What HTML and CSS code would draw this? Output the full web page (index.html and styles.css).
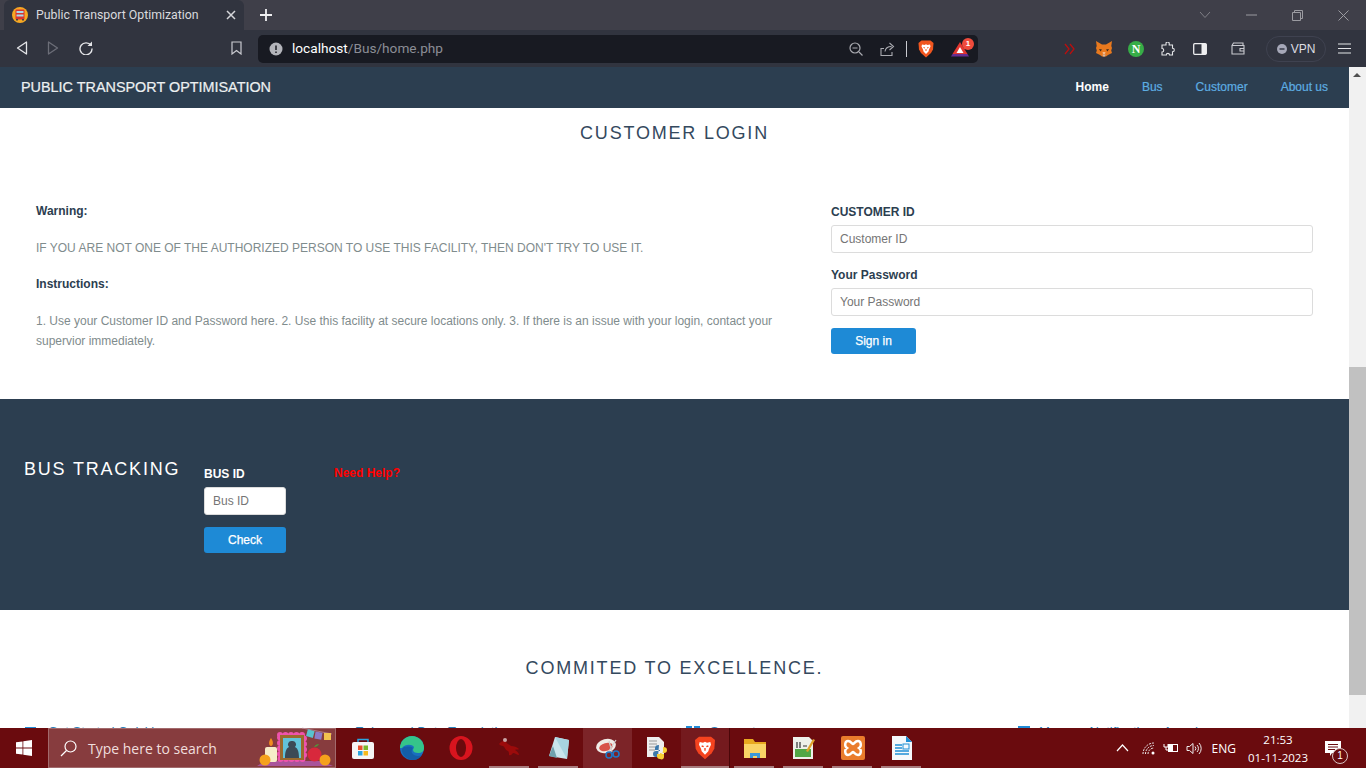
FILE: index.html
```html
<!DOCTYPE html>
<html lang="en">
<head>
    <meta charset="UTF-8">
    <meta name="viewport" content="width=device-width, initial-scale=1.0">
    <link rel="stylesheet" href="styles.css">
    <title>Public Transport Optimization</title>
</head>
<body>
<div class="screen">
    <div class="tabstrip">
        <div class="tab">
            <svg class="favicon" width="16" height="16" viewBox="0 0 16 16"><circle cx="8" cy="8" r="8" fill="#f7a823"/><rect x="3.500" y="2.500" width="9" height="10" rx="1" fill="#d8352f"/><rect x="4.500" y="4" width="7" height="2" fill="#a9d8ea"/><rect x="4.500" y="7.500" width="7" height="2" fill="#a9d8ea"/><rect x="4" y="12" width="2" height="1.500" fill="#444"/><rect x="10" y="12" width="2" height="1.500" fill="#444"/></svg>
            <span class="tab-title">Public Transport Optimization</span>
            <svg class="tab-close" width="10" height="10" viewBox="0 0 10 10"><path d="M1 1l8 8M9 1l-8 8" stroke="#d5d6da" stroke-width="1.500"/></svg>
        </div>
        <svg class="new-tab" width="14" height="14" viewBox="0 0 14 14"><path d="M7 1v12M1 7h12" stroke="#f0f0f2" stroke-width="1.800"/></svg>
        <div class="win-controls">
            <svg width="12" height="8" viewBox="0 0 12 8"><path d="M1 1l5 5.500 5-5.500" fill="none" stroke="#7f7f86"/></svg>
            <svg width="11" height="2" viewBox="0 0 11 2"><path d="M0 1h11" stroke="#9b9ba1"/></svg>
            <svg width="11" height="11" viewBox="0 0 11 11"><path d="M.5 2.500h8v8h-8zM2.500 2.500v-2h8v8h-2" fill="none" stroke="#9b9ba1"/></svg>
            <svg width="11" height="11" viewBox="0 0 11 11"><path d="M.5 .5l10 10M10.500 .5l-10 10" stroke="#9b9ba1"/></svg>
        </div>
    </div>

    <div class="toolbar">
        <div class="nav-btns">
            <svg width="12" height="14" viewBox="0 0 12 14"><path d="M10.500 1v12L1.500 7z" fill="none" stroke="#e4e5e8" stroke-width="1.300" stroke-linejoin="round"/></svg>
            <svg width="12" height="14" viewBox="0 0 12 14"><path d="M1.500 1v12L10.500 7z" fill="none" stroke="#6c6e78" stroke-width="1.300" stroke-linejoin="round"/></svg>
            <svg width="14" height="14" viewBox="0 0 14 14"><path d="M12 4.500A6 6 0 1 0 13 7.500" fill="none" stroke="#e4e5e8" stroke-width="1.400"/><path d="M13 .5V5H8.500z" fill="#e4e5e8"/></svg>
        </div>
        <svg class="bookmark" width="11" height="14" viewBox="0 0 11 14"><path d="M1 1h9v12L5.500 9.500 1 13z" fill="none" stroke="#c9cad0" stroke-width="1.200"/></svg>
        <div class="urlbar">
            <svg class="url-info" width="14" height="14" viewBox="0 0 14 14"><circle cx="7" cy="7" r="6.500" fill="#b4b5bb"/><path d="M7 3.500V8M7 9.500V11" stroke="#1b1d25" stroke-width="1.500"/></svg>
            <span class="url-text"><span class="url-host">localhost</span>/Bus/home.php</span>
            <div class="url-icons">
                <svg width="14" height="14" viewBox="0 0 14 14"><circle cx="6" cy="6" r="5" fill="none" stroke="#a9aab0" stroke-width="1.200"/><path d="M3.500 6h5M10 10l3.500 3.500" stroke="#a9aab0" stroke-width="1.200"/></svg>
                <svg class="url-share" width="15" height="14" viewBox="0 0 15 14"><path d="M4 6.500H1v7h11V10M5 9.500c.5-3.500 3-5 6.500-5M9.500 1l4 3.500-4 3.500" fill="none" stroke="#a9aab0" stroke-width="1.100"/></svg>
                <span class="url-divider"></span>
                <svg class="url-brave" width="16" height="18" viewBox="0 0 16 18"><path d="M3.500 .5h9L15.500 3 15 9.500 13 13l-5 4.500L3 13 1 9.500.5 3z" fill="#f1561f"/><path d="M4 4.500l2.500.5L8 4.300 9.500 5 12 4.500l.5 2L11 9.500l-.5 2L8 14l-2.500-2.500-.5-2L3.500 6.500z" fill="#fff"/><path d="M5.500 7.500l1.500.5M10.500 7.500L9 8M8 9v2" stroke="#f1561f"/></svg>
                <span class="bat">
                    <svg width="18" height="16" viewBox="0 0 18 16"><path d="M9 1l7.500 12h-15z" fill="#e2362f"/><path d="M1.500 13H16.500L18 15.500H0z" fill="#662d91"/><path d="M9 6l3.500 6h-7z" fill="#fff"/></svg>
                    <span class="bat-badge">1</span>
                </span>
            </div>
        </div>
        <div class="ext-icons">
            <svg class="ext-arrows" width="11" height="12" viewBox="0 0 11 12"><path d="M1 1l4 5-4 5M6 1l4 5-4 5" fill="none" stroke="#b80f0f" stroke-width="1.300"/></svg>
            <svg class="ext-fox" width="16" height="16" viewBox="0 0 16 16"><path d="M0 0l6 3.500h4L16 0l-.7 5 .7 2-.8 2.500.8 2.500-4 2-2 1.500H6l-2-1.500-4-2 .8-2.500L0 7l.7-2z" fill="#e8791e"/><path d="M3 8l3 .5-1.500 2zM13 8l-3 .5 1.500 2z" fill="#3c2a1c"/><path d="M6.500 11h3L9 13H7z" fill="#f5b98a"/><path d="M6.500 13.500h3L9 15.500H7z" fill="#cdb8a8"/></svg>
            <span class="ext-n">N</span>
            <svg class="ext-puzzle" width="14" height="14" viewBox="0 0 14 14"><path d="M5 1.500a1.600 1.600 0 0 1 3.200 0V3h3.300v3.200a1.700 1.700 0 0 1 0 3.600V13H8.500a1.600 1.600 0 0 0-3.200 0H1V10a1.700 1.700 0 0 0 0-3.500V3h4z" fill="none" stroke="#e4e5e8" stroke-width="1.100"/></svg>
            <svg class="ext-side" width="14" height="12" viewBox="0 0 14 12"><rect x=".7" y=".7" width="12.600" height="10.600" rx="1" fill="none" stroke="#eeeef0" stroke-width="1.300"/><rect x="8.500" y="1" width="5" height="10" fill="#eeeef0"/></svg>
            <svg class="ext-wallet" width="14" height="13" viewBox="0 0 14 13"><path d="M1 3.500h12V12H1zM1 3.500L2.500 1H12v2.500M9 6.500h4V9H9z" fill="none" stroke="#c9cad0" stroke-width="1.100"/></svg>
            <div class="vpn">
                <svg width="10" height="10" viewBox="0 0 10 10"><circle cx="5" cy="5" r="5" fill="#a6a8b8"/><path d="M2.500 5h5" stroke="#30333f" stroke-width="1.400"/></svg>
                <span>VPN</span>
            </div>
            <svg class="ext-menu" width="13" height="11" viewBox="0 0 13 11"><path d="M0 1h13M0 5.500h13M0 10h13" stroke="#e4e5e8" stroke-width="1.200"/></svg>
        </div>
    </div>

    <div class="viewport">
        <div class="page">
            <nav class="navbar">
                <a class="brand">PUBLIC TRANSPORT OPTIMISATION</a>
                <ul class="nav-links">
                    <li class="active">Home</li>
                    <li>Bus</li>
                    <li>Customer</li>
                    <li>About us</li>
                </ul>
            </nav>

            <section class="login">
                <h2 class="heading">CUSTOMER LOGIN</h2>
                <div class="login-row">
                    <div class="login-info">
                        <p class="strong">Warning:</p>
                        <p>IF YOU ARE NOT ONE OF THE AUTHORIZED PERSON TO USE THIS FACILITY, THEN DON'T TRY TO USE IT.</p>
                        <p class="strong">Instructions:</p>
                        <p class="steps">1. Use your Customer ID and Password here. 2. Use this facility at secure locations only. 3. If there is an issue with your login, contact your supervior immediately.</p>
                    </div>
                    <form class="login-form">
                        <label for="cid">CUSTOMER ID</label>
                        <input id="cid" type="text" placeholder="Customer ID">
                        <label for="pwd">Your Password</label>
                        <input id="pwd" type="text" placeholder="Your Password">
                        <button type="button" class="btn">Sign in</button>
                    </form>
                </div>
            </section>

            <section class="tracking">
                <h2 class="tracking-title">BUS TRACKING</h2>
                <form class="tracking-form">
                    <label for="bid">BUS ID</label>
                    <input id="bid" type="text" placeholder="Bus ID">
                    <button type="button" class="btn">Check</button>
                </form>
                <a class="help">Need Help?</a>
            </section>

            <section class="excellence">
                <h2 class="heading">COMMITED TO EXCELLENCE.</h2>
                <div class="features">
                    <span class="feature f1"><i></i>Get Started Quickly</span>
                    <span class="feature f2">Enhanced Data Translation</span>
                    <span class="feature f3"><i></i>Support</span>
                    <span class="feature f4"><i></i>Manage Notifications Anywhere</span>
                </div>
            </section>
        </div>
        <div class="scrollbar">
            <span class="arrow"></span>
            <div class="thumb"></div>
        </div>
    </div>

    <div class="taskbar">
        <svg class="start" width="16" height="16" viewBox="0 0 16 16"><path d="M0 2.300l6.500-.9v6.200H0zM7.300 1.300L16 0v7.600H7.300zM0 8.400h6.500v6.200L0 13.700zM7.300 8.400H16V16l-8.700-1.300z" fill="#fff"/></svg>
        <div class="search">
            <svg width="17" height="17" viewBox="0 0 17 17"><circle cx="10.500" cy="6.500" r="5.500" fill="none" stroke="#fff" stroke-width="1.200"/><path d="M6.500 10.500L1 16" stroke="#fff" stroke-width="1.300"/></svg>
            <span>Type here to search</span>
            <svg class="search-art" width="80" height="40" viewBox="0 0 80 40">
                <path d="M2 39l8-5h56l12 5z" fill="#a9549b"/>
                <rect x="10" y="20" width="12" height="15" rx="2" fill="#f6ecc8"/>
                <path d="M16 11c3 4 2 8 0 8s-3-4 0-8z" fill="#f28c1e"/>
                <rect x="25" y="8" width="24" height="24" fill="#ee53ad" stroke="#ee53ad" stroke-width="6" stroke-dasharray="0 5.500" stroke-linecap="round"/>
                <rect x="25" y="8" width="24" height="25" fill="#9b6a2d"/>
                <rect x="28" y="11" width="18" height="20" fill="#62c3d8"/>
                <path d="M37 14a3.500 3.500 0 0 1 3 6c2 1 4 3 4 11H30c0-8 2-10 4-11a3.500 3.500 0 0 1 3-6z" fill="#3c4a55"/>
                <circle cx="59.500" cy="27.500" r="7" fill="#d8283c"/>
                <path d="M59 20c1-2 3-3 5-3-1 2-3 3-5 3z" fill="#4f9a3a"/>
                <circle cx="10" cy="33" r="5.500" fill="#f5a11c"/>
                <circle cx="70" cy="33" r="5.500" fill="#f5a11c"/>
                <path d="M47 1l30 6" stroke="#c8a0b0" stroke-width=".6"/>
                <rect x="52" y="3" width="7" height="7" fill="#58c3cf" transform="rotate(15 55 6)"/>
                <rect x="60" y="5" width="7" height="7" fill="#8d7ac8" transform="rotate(10 63 8)"/>
                <rect x="69" y="6" width="7" height="7" fill="#f2c14e"/>
            </svg>
        </div>
        <div class="task-icons">
            <div class="task-icon">
                <svg width="24" height="24" viewBox="0 0 24 24"><path d="M7 7V3.500h10V7" fill="none" stroke="#2ba5e0" stroke-width="1.500"/><rect x="1" y="6" width="22" height="17" rx="2" fill="#f5f5f5"/><rect x="7" y="9.500" width="4.500" height="4.500" fill="#e8502e"/><rect x="12.500" y="9.500" width="4.500" height="4.500" fill="#79b82b"/><rect x="7" y="15" width="4.500" height="4.500" fill="#2ba5e0"/><rect x="12.500" y="15" width="4.500" height="4.500" fill="#f5b91b"/></svg>
            </div>
            <div class="task-icon">
                <svg width="24" height="24" viewBox="0 0 24 24"><circle cx="12" cy="12" r="12" fill="#1a6fc0"/><path d="M0 12A12 12 0 0 1 24 12c0 3-2 5-6 5-3 0-5-1-5-3 0-1 1-2 1-3-2-3-9-3-12 1z" fill="#35c48a"/><path d="M2 13c-1 5 5 11 11 11 4 0 7-2 9-5-4 2-8 1-10-2-1-2 0-4 1-5-3-2-9-2-11 1z" fill="#145ea8"/></svg>
            </div>
            <div class="task-icon">
                <svg width="24" height="24" viewBox="0 0 24 24"><ellipse cx="12" cy="12" rx="11.500" ry="12" fill="#d8141e"/><ellipse cx="12" cy="12" rx="5" ry="9" fill="#6b0a0d"/></svg>
            </div>
            <div class="task-icon running">
                <svg width="24" height="24" viewBox="0 0 24 24"><path d="M1 8c2-3 6-4 7-2 1 2 3 2 5 4 3 0 6 1 8 3-1 1-3 0-4 1 2 1 4 3 4 5-2 0-4-2-6-2-1 1-2 3-4 2 0-2 0-3-1-4-3-1-3-4-5-5-2 0-3-1-4-2z" fill="#9c0b0b"/><circle cx="7" cy="4" r="2" fill="#c9a5a5"/></svg>
            </div>
            <div class="task-icon running">
                <svg width="24" height="24" viewBox="0 0 24 24"><path d="M8 1l14 3-2 19L2 20z" fill="#c9e4ec"/><path d="M8 1l14 3-2 19z" fill="#a8d4e0"/><path d="M2 20l4-10 4 12z" fill="#6fa0ad"/></svg>
            </div>
            <div class="task-icon open">
                <svg width="24" height="24" viewBox="0 0 24 24"><ellipse cx="10" cy="10" rx="10" ry="7" fill="#f0ece8" transform="rotate(-15 10 10)"/><ellipse cx="10" cy="11" rx="7" ry="4" fill="#d8534a" transform="rotate(-15 10 11)"/><path d="M13 5l3 11M20 4l-7 11" stroke="#d0d0d0" stroke-width="1.200"/><circle cx="13" cy="19" r="3" fill="none" stroke="#1f78c8" stroke-width="1.600"/><circle cx="20" cy="18" r="3" fill="none" stroke="#1f78c8" stroke-width="1.600"/></svg>
            </div>
            <div class="task-icon">
                <svg width="24" height="24" viewBox="0 0 24 24"><path d="M2 1h12l5 5v15H2z" fill="#eeeeee"/><path d="M4 5h8M4 8h8M4 11h6M4 14h6" stroke="#999"/><path d="M14 9c-3 0-4 1-4 3v2h5v1h-4c-2 0-3 1-3 3s1 3 3 3h2z" fill="#3b78ab"/><path d="M18 11c3 0 4 1 4 3s-1 3-3 3h-4v1h4v3c0 2-2 3-4 2-2 0-3-1-3-3v-2h3c2 0 3-1 3-3z" fill="#f7cf35"/></svg>
            </div>
            <div class="task-icon open brave running">
                <svg width="22" height="24" viewBox="0 0 16 18"><path d="M3.500 .5h9L15.500 3 15 9.500 13 13l-5 4.500L3 13 1 9.500.5 3z" fill="#f4431f"/><path d="M4 4.500l2.500.5L8 4.300 9.500 5 12 4.500l.5 2L11 9.500l-.5 2L8 14l-2.500-2.500-.5-2L3.500 6.500z" fill="#fff"/><path d="M5.500 7.500l1.500.5M10.500 7.500L9 8M8 9v2" stroke="#f4431f"/></svg>
            </div>
            <div class="task-icon running">
                <svg width="24" height="22" viewBox="0 0 24 22"><path d="M1 2h9l2 3h11v16H1z" fill="#e8a91f"/><rect x="1" y="7" width="22" height="14" fill="#f9d466"/><path d="M7 21v-5h10v5h-3v-2h-4v2z" fill="#3d9ad8"/></svg>
            </div>
            <div class="task-icon running">
                <svg width="24" height="24" viewBox="0 0 24 24"><path d="M1 1h16l4 4v18H1z" fill="#eef1ea"/><rect x="3" y="13" width="16" height="8" fill="#52a745"/><path d="M5 6v6M8 6v6M11 10h4" stroke="#333" stroke-width="1.200"/><path d="M14 15l7-12 2 1-7 12z" fill="#e0a22b"/></svg>
            </div>
            <div class="task-icon running">
                <svg width="24" height="24" viewBox="0 0 24 24"><rect width="24" height="24" rx="2" fill="#ea7c2c"/><path d="M7 5c3 0 4 3 5 3s2-3 5-3 4 5 1 7c3 2 2 7-1 7s-4-3-5-3-2 3-5 3-4-5-1-7c-3-2-2-7 1-7z" fill="none" stroke="#fff" stroke-width="2.400"/></svg>
            </div>
            <div class="task-icon running">
                <svg width="20" height="24" viewBox="0 0 20 24"><path d="M0 0h14l6 6v18H0z" fill="#f5f8fb"/><path d="M14 0l6 6h-6z" fill="#1f8fd6"/><path d="M3 9h7M3 12h7M3 15h14M3 18h14" stroke="#1f8fd6" stroke-width="1.300"/><rect x="11" y="8" width="6" height="5" fill="none" stroke="#1f8fd6"/></svg>
            </div>
        </div>
        <div class="tray">
            <svg width="13" height="8" viewBox="0 0 13 8"><path d="M1 7l5.500-6L12 7" fill="none" stroke="#fff" stroke-width="1.200"/></svg>
            <svg class="tray-wifi" width="13" height="13" viewBox="0 0 13 13"><path d="M1 12A11 11 0 0 1 12 1M3.500 12A8.500 8.500 0 0 1 12 3.500M6 12a6 6 0 0 1 6-6" fill="none" stroke="#eee" stroke-dasharray="2 1"/><circle cx="11" cy="11" r="1.500" fill="#fff"/></svg>
            <svg class="tray-battery" width="16" height="10" viewBox="0 0 16 10"><path d="M1 1v3h4V1M3 4v3h4" fill="none" stroke="#fff"/><rect x="5.500" y="1.500" width="9" height="7" fill="none" stroke="#fff"/><rect x="6" y="2" width="4" height="6" fill="#fff"/></svg>
            <svg class="tray-sound" width="16" height="13" viewBox="0 0 16 13"><path d="M1 4.500h2.500L7 1.500v10L3.500 8.500H1z" fill="none" stroke="#eee"/><path d="M9 4.500a3 3 0 0 1 0 4M11 3a5 5 0 0 1 0 7M13 1a8 8 0 0 1 0 11" fill="none" stroke="#eee"/></svg>
            <span class="tray-lang">ENG</span>
            <div class="clock"><span>21:53</span><span>01-11-2023</span></div>
            <div class="notify">
                <svg width="16" height="15" viewBox="0 0 16 15"><path d="M0 0h16v12H7l-2 3v-3H0z" fill="#fff"/><path d="M3 3.500h10M3 6h10M3 8.500h7" stroke="#6a0b0e"/></svg>
                <span class="notify-count">1</span>
            </div>
        </div>
    </div>
</div>
</body>
</html>
```

FILE: styles.css
```css
* {
  margin: 0;
  padding: 0;
  box-sizing: border-box;
}

html, body {
  height: 100%;
  overflow: hidden;
}

body {
  font-family: "Liberation Sans", Arial, sans-serif;
}

svg {
  display: block;
  flex-shrink: 0;
}

.screen {
  height: 768px;
  display: flex;
  flex-direction: column;
}

/* browser chrome */
.tabstrip {
  height: 30px;
  background: #3f3f49;
  display: flex;
  align-items: center;
  padding-left: 4px;
}

.tab {
  width: 240px;
  height: 30px;
  background: #31343f;
  border-radius: 6px 6px 0 0;
  display: flex;
  align-items: center;
  padding: 0 8px;
}

.tab-title {
  margin-left: 8px;
  font-family: Roboto, sans-serif;
  font-size: 12.300px;
  color: #d9dade;
  flex: 1;
  white-space: nowrap;
}

.new-tab {
  margin-left: 15px;
}

.win-controls {
  margin-left: auto;
  display: flex;
  align-items: center;
  gap: 35px;
  padding-right: 17px;
}

.toolbar {
  height: 37px;
  background: #31343f;
  display: flex;
  align-items: center;
}

.nav-btns {
  display: flex;
  align-items: center;
  gap: 19.500px;
  padding: 0 0 1px 15.500px;
  width: 230px;
}

.bookmark {
  margin: 0 0 1px 1px;
}

.urlbar {
  width: 720px;
  height: 28px;
  margin-left: 16px;
  background: #181a22;
  border-radius: 5px;
  display: flex;
  align-items: center;
  padding-left: 11px;
}

.url-text {
  margin-left: 9px;
  padding-bottom: 2px;
  font-family: Roboto, sans-serif;
  font-size: 13.650px;
  color: #8b8d95;
}

.url-host {
  color: #fff;
}

.url-icons {
  margin-left: auto;
  display: flex;
  align-items: center;
  padding-right: 9px;
}

.url-share {
  margin-left: 17px;
}

.url-divider {
  width: 1px;
  height: 16px;
  background: #c9cad0;
  margin: 0 11px;
}

.url-brave {
  margin-right: 17px;
}

.bat {
  position: relative;
  display: block;
}

.bat-badge {
  position: absolute;
  top: -3px;
  right: -5px;
  width: 12px;
  height: 12px;
  border-radius: 50%;
  background: #ef4b3c;
  color: #fff;
  font-size: 8px;
  font-weight: bold;
  line-height: 12px;
  text-align: center;
}

.ext-icons {
  display: flex;
  align-items: center;
  flex: 1;
  padding-left: 86px;
}

.ext-fox {
  margin-left: 21px;
}

.ext-n {
  width: 16px;
  height: 16px;
  margin-left: 16px;
  border-radius: 50%;
  background: #37ad47;
  color: #fff;
  font-family: "Liberation Serif", serif;
  font-size: 12px;
  font-weight: bold;
  line-height: 16px;
  text-align: center;
}

.ext-puzzle {
  margin-left: 17px;
}

.ext-side {
  margin-left: 18px;
}

.ext-wallet {
  margin-left: 24px;
}

.vpn {
  width: 60px;
  height: 26px;
  margin-left: 21px;
  border: 1px solid #3f4250;
  border-radius: 13px;
  display: flex;
  align-items: center;
  justify-content: center;
  gap: 4px;
  color: #dcdde2;
  font-size: 12px;
}

.ext-menu {
  margin-left: 12px;
}

/* page */
.viewport {
  height: 661px;
  display: flex;
  overflow: hidden;
  background: #fff;
}

.page {
  flex: 1;
  min-width: 0;
}

.navbar {
  height: 41px;
  background: #2c3e50;
  display: flex;
  align-items: center;
  justify-content: space-between;
  padding: 0 21px 2px;
}

.brand {
  font-size: 14.400px;
  color: #ecf0f1;
  -webkit-text-stroke: 0.2px #ecf0f1;
}

.nav-links {
  display: flex;
  list-style: none;
  gap: 33px;
  font-size: 12px;
  color: #5dade2;
  -webkit-text-stroke: 0.2px #5dade2;
}

.nav-links .active {
  color: #fff;
  font-weight: bold;
  -webkit-text-stroke: 0;
}

.heading {
  font-size: 18px;
  font-weight: normal;
  letter-spacing: 1.800px;
  color: #34495e;
  text-align: center;
}

.login {
  height: 291px;
  padding-top: 15px;
}

.login-row {
  display: flex;
  padding: 0 36px;
  margin-top: 57px;
}

.login-info {
  width: 740px;
  font-size: 12px;
  color: #7f8c8d;
}

.login-info p {
  line-height: 20px;
  margin-bottom: 16.500px;
}

.login-info .strong {
  font-weight: bold;
  color: #2c3e50;
}

.login-info .steps {
  margin-bottom: 0;
}

.login-form {
  width: 482px;
  margin-left: 55px;
  padding-top: 4px;
  display: flex;
  flex-direction: column;
}

.login-form label {
  font-size: 12px;
  font-weight: bold;
  color: #2c3e50;
  height: 14px;
  margin-bottom: 6px;
}

input {
  height: 28px;
  border: 1px solid #dcdcdc;
  border-radius: 3px;
  padding: 0 8px;
  font-family: "Liberation Sans", Arial, sans-serif;
  font-size: 12px;
  margin-bottom: 15px;
  background: #fff;
}

input::placeholder {
  color: #757575;
  opacity: 1;
}

.btn {
  width: 85px;
  height: 26px;
  margin-top: -3px;
  background: #1e8ad6;
  color: #fff;
  border: 0;
  border-radius: 3px;
  font-family: "Liberation Sans", Arial, sans-serif;
  font-size: 12px;
  -webkit-text-stroke: 0.25px #fff;
}

.tracking {
  height: 211px;
  background: #2c3e50;
  display: flex;
  align-items: flex-start;
  padding: 60px 0 0 24px;
}

.tracking-title {
  width: 180px;
  font-size: 18px;
  font-weight: normal;
  letter-spacing: 1.800px;
  line-height: 20px;
  color: #fff;
}

.tracking-form {
  width: 82px;
  padding-top: 8px;
  display: flex;
  flex-direction: column;
}

.tracking-form label {
  font-size: 12px;
  font-weight: bold;
  color: #fff;
  height: 14px;
  margin-bottom: 6px;
}

.tracking-form .btn {
  width: 82px;
}

.help {
  margin: 7px 0 0 48px;
  font-size: 12px;
  font-weight: bold;
  color: #f00;
}

.excellence {
  padding-top: 48px;
}

.features {
  margin-top: 45px;
  position: relative;
  height: 20px;
  font-size: 13px;
  color: #2980b9;
}

.feature {
  position: absolute;
  top: 0;
  white-space: nowrap;
}

.feature i {
  position: absolute;
  top: 2px;
  height: 14px;
  background: #1e8ad6;
}

.f1 { left: 48px; }
.f2 { left: 355px; }
.f3 { left: 710px; }
.f4 { left: 1039px; }

.f1 i { left: -23px; width: 11px; top: 3px; }
.f3 i { left: -24px; width: 14px; background: linear-gradient(90deg, #1e8ad6 6px, #fff 6px, #fff 8px, #1e8ad6 8px); }
.f4 i { left: -21px; width: 12px; }

.scrollbar {
  width: 17px;
  background: #f1f1f1;
  position: relative;
}

.arrow {
  position: absolute;
  top: 6px;
  left: 4px;
  border-left: 4px solid transparent;
  border-right: 4px solid transparent;
  border-bottom: 4px solid #505050;
}

.thumb {
  position: absolute;
  top: 300px;
  left: 0;
  width: 17px;
  height: 328px;
  background: #c1c1c1;
}

/* windows taskbar */
.taskbar {
  height: 40px;
  background: #6a0b0e;
  display: flex;
  align-items: center;
  padding-left: 16px;
  color: #fff;
}

.search {
  width: 288px;
  height: 40px;
  margin-left: 16px;
  background: #873c3e;
  border: 1px solid #a26a6c;
  display: flex;
  align-items: center;
  padding-left: 11px;
  position: relative;
}

.search span {
  margin-left: 11px;
  font-family: "Open Sans", sans-serif;
  font-size: 14px;
  color: #f0dedd;
}

.search-art {
  position: absolute;
  right: 0;
  bottom: 0;
}

.task-icons {
  display: flex;
  margin-left: 2px;
}

.task-icon {
  width: 49px;
  height: 40px;
  display: flex;
  align-items: center;
  justify-content: center;
  position: relative;
}

.task-icon.open {
  background: #7c2428;
}

.task-icon.brave {
  background: #741a1e;
  border-right: 1px solid #4a0608;
}

.task-icon.running::after {
  content: "";
  position: absolute;
  left: 4px;
  right: 5px;
  bottom: 0;
  height: 2px;
  background: #a87c7e;
}

.task-icon.brave::after {
  left: 0;
  right: 0;
}

.tray {
  margin-left: auto;
  display: flex;
  align-items: center;
  padding-right: 25px;
}

.tray-wifi {
  margin-left: 13px;
}

.tray-battery {
  margin-left: 8px;
}

.tray-sound {
  margin-left: 7px;
}

.tray-lang {
  margin-left: 10px;
  font-family: "Open Sans", sans-serif;
  font-size: 12px;
}

.clock {
  margin-left: 13px;
  width: 58px;
  display: flex;
  flex-direction: column;
  align-items: center;
  gap: 3px;
  font-family: "Open Sans", sans-serif;
  font-size: 11.500px;
  line-height: 15px;
  white-space: nowrap;
}

.notify {
  margin-left: 18px;
  position: relative;
}

.notify-count {
  position: absolute;
  right: -7px;
  bottom: -8px;
  width: 16px;
  height: 16px;
  border: 1px solid #d9c4c4;
  border-radius: 50%;
  background: #6a0b0e;
  font-size: 10px;
  line-height: 14px;
  text-align: center;
}
```
